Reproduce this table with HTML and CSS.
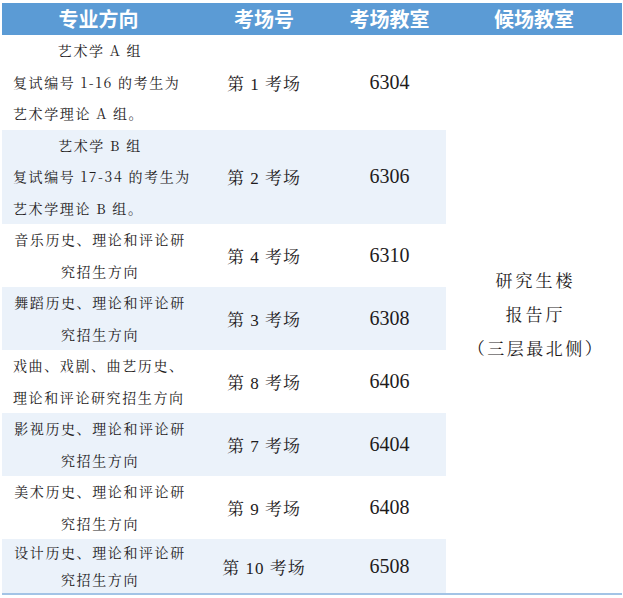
FILE: index.html
```html
<!DOCTYPE html>
<html lang="zh">
<head>
<meta charset="utf-8">
<title>考场安排</title>
<link rel="stylesheet" href="styles.css">
</head>
<body>
<table class="exam">
  <colgroup>
    <col class="c1"><col class="c2"><col class="c3"><col class="c4">
  </colgroup>
  <thead>
    <tr><th>专业方向</th><th>考场号</th><th>考场教室</th><th>候场教室</th></tr>
  </thead>
  <tbody>
    <tr class="tall">
      <td class="major"><div class="ctr">艺术学 A 组</div><div class="lft">复试编号 1-16 的考生为</div><div class="lft">艺术学理论 A 组。</div></td>
      <td class="room">第 1 考场</td>
      <td class="num">6304</td>
      <td class="wait" rowspan="8"><div class="w1">研究生楼</div><div class="w1">报告厅</div><div class="w2">（三层最北侧）</div></td>
    </tr>
    <tr class="tall alt">
      <td class="major"><div class="ctr">艺术学 B 组</div><div class="lft">复试编号 17-34 的考生为</div><div class="lft">艺术学理论 B 组。</div></td>
      <td class="room">第 2 考场</td>
      <td class="num">6306</td>
    </tr>
    <tr>
      <td class="major"><div class="ctr">音乐历史、理论和评论研</div><div class="ctr">究招生方向</div></td>
      <td class="room">第 4 考场</td>
      <td class="num">6310</td>
    </tr>
    <tr class="alt">
      <td class="major"><div class="ctr">舞蹈历史、理论和评论研</div><div class="ctr">究招生方向</div></td>
      <td class="room">第 3 考场</td>
      <td class="num">6308</td>
    </tr>
    <tr>
      <td class="major"><div class="lft">戏曲、戏剧、曲艺历史、</div><div class="lft">理论和评论研究招生方向</div></td>
      <td class="room">第 8 考场</td>
      <td class="num">6406</td>
    </tr>
    <tr class="alt">
      <td class="major"><div class="ctr">影视历史、理论和评论研</div><div class="ctr">究招生方向</div></td>
      <td class="room">第 7 考场</td>
      <td class="num">6404</td>
    </tr>
    <tr>
      <td class="major"><div class="ctr">美术历史、理论和评论研</div><div class="ctr">究招生方向</div></td>
      <td class="room">第 9 考场</td>
      <td class="num">6408</td>
    </tr>
    <tr class="alt last">
      <td class="major"><div class="ctr">设计历史、理论和评论研</div><div class="ctr">究招生方向</div></td>
      <td class="room">第 10 考场</td>
      <td class="num">6508</td>
    </tr>
  </tbody>
</table>
</body>
</html>
```

FILE: styles.css
```css
html, body {
  margin: 0;
  padding: 0;
  background: #ffffff;
}

body {
  padding: 3px 1px 0 2px;
  color: #1e1b1c;
  font-family: "Liberation Serif", "Noto Serif CJK SC", "Noto Sans CJK SC", serif;
}

.exam {
  width: 620px;
  border-collapse: collapse;
  table-layout: fixed;
  border-bottom: 2px solid #a3c4e6;
}

.c1 { width: 193px; }
.c2 { width: 138px; }
.c3 { width: 113px; }
.c4 { width: 176px; }

.exam th {
  background: #5b9bd5;
  color: #ffffff;
  font-family: "Noto Sans CJK SC", "Noto Sans", sans-serif;
  font-weight: 700;
  font-size: 20px;
  height: 32px;
  padding: 0;
  line-height: 32px;
  text-align: center;
}

.exam td {
  padding: 0;
  text-align: center;
  vertical-align: middle;
  background: #ffffff;
}

.exam tr.alt td {
  background: #ebf2fa;
}

.exam td.wait {
  background: #ffffff;
}

.major {
  font-family: "Noto Serif CJK SC", "Noto Sans CJK SC", serif;
  font-size: 14px;
  letter-spacing: 1.6px;
  line-height: 31.5px;
  white-space: nowrap;
  padding: 0 8px 0 11px !important;
}

tr.last .major {
  line-height: 27px;
}

.ctr { text-align: center; }
.lft { text-align: left; }

.room {
  font-family: "Liberation Serif", "Noto Serif CJK SC", "Noto Sans CJK SC", serif;
  font-size: 17px;
  letter-spacing: 1px;
  white-space: nowrap;
}

.num {
  font-family: "Liberation Serif", serif;
  font-size: 20px;
}

.wait {
  font-family: "Noto Serif CJK SC", "Noto Sans CJK SC", serif;
  font-size: 17px;
  line-height: 34px;
  white-space: nowrap;
}

.w1 {
  letter-spacing: 3px;
  padding-left: 3px;
}

.w2 {
  letter-spacing: 2.5px;
  padding-left: 4px;
}
```
